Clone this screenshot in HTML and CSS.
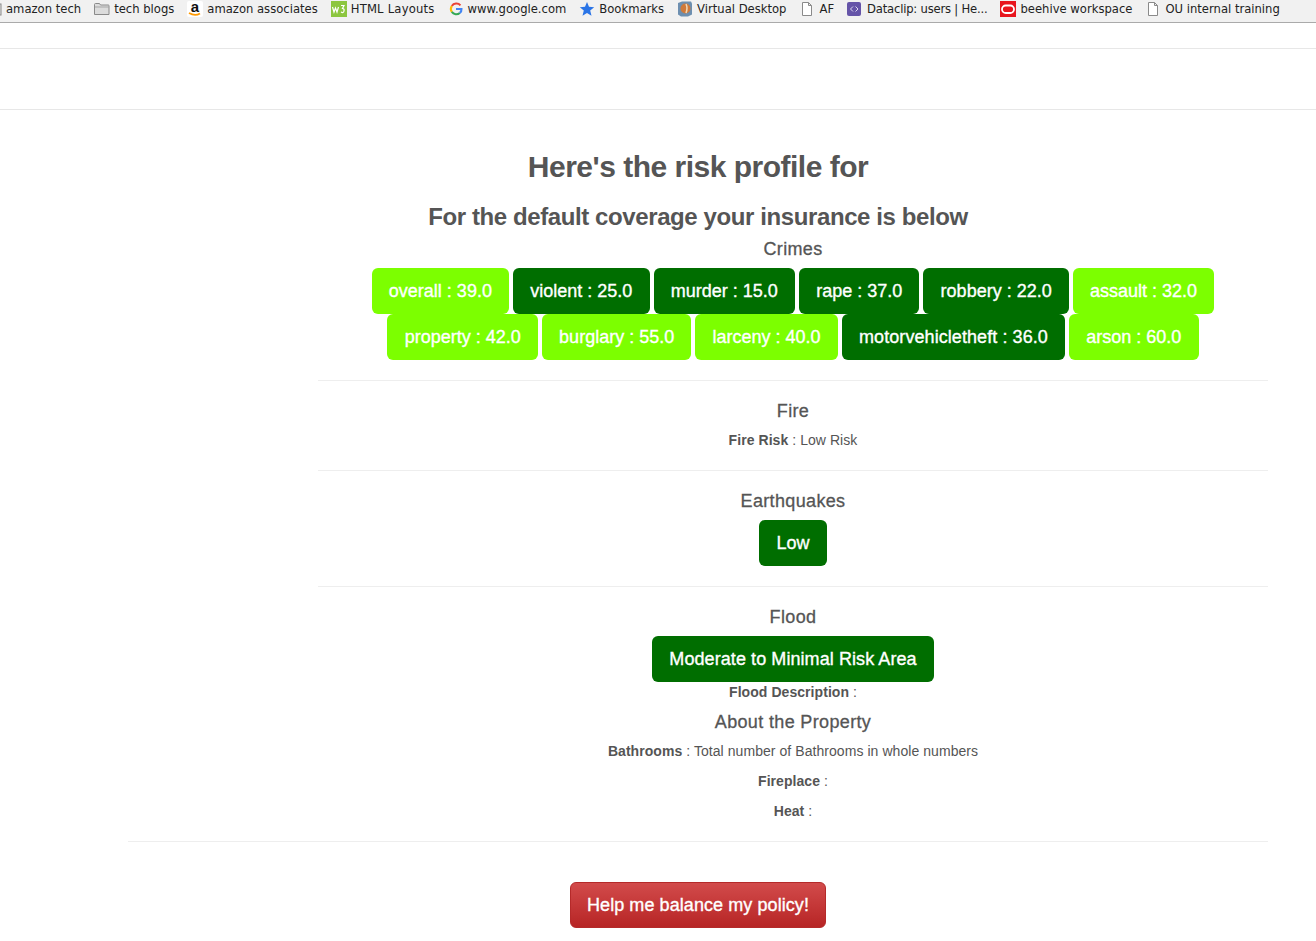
FILE: index.html
```html
<!DOCTYPE html>
<html lang="en">
<head>
<meta charset="utf-8">
<title>Risk profile</title>
<link rel="stylesheet" href="styles.css">
</head>
<body>
<div class="bookmarks">
  <div class="bm bm-first"><svg class="ico" viewBox="0 0 16 16"><rect x="1" y="3" width="14" height="11" fill="#e6e6e6" stroke="#888"/></svg><span>amazon tech</span></div>
  <div class="bm"><svg class="ico" viewBox="0 0 16 16"><path d="M.5 13.500V3.500q0-1 1-1h4l1 1.500h8q.5 0 .5 1v8.500z" fill="#dcdcdc" stroke="#8a8a8a"/><path d="M1 6h14" stroke="#a5a5a5"/></svg><span>tech blogs</span></div>
  <div class="bm"><svg class="ico" viewBox="0 0 16 16"><rect width="16" height="16" rx="2" fill="#fff"/><text x="8" y="10.500" class="ico-a">a</text><path d="M2 12q6 3.500 11 .5" fill="none" stroke="#f90" stroke-width="1.800"/></svg><span>amazon associates</span></div>
  <div class="bm"><svg class="ico" viewBox="0 0 16 16"><rect width="16" height="16" fill="#8cc63f"/><path d="M1.500 6l1.500 5 1.500-4 1.500 4 1.500-5M10 4.500h3l-1.500 3q2 0 1.500 2.500t-3 1" fill="none" stroke="#fff" stroke-width="1.200"/></svg><span class="wide">HTML Layouts</span></div>
  <div class="bm"><svg class="ico" viewBox="-1.500 -1.500 19 19"><path d="M13.300 3.700A6.500 6.500 0 0 0 3 4.500" fill="none" stroke="#ea4335" stroke-width="2.500"/><path d="M3 4.500a6.500 6.500 0 0 0 0 7" fill="none" stroke="#fbbc05" stroke-width="2.500"/><path d="M3 11.500a6.500 6.500 0 0 0 9.500 1.300" fill="none" stroke="#34a853" stroke-width="2.500"/><path d="M12.500 12.800A6 6 0 0 0 14.500 8H8" fill="none" stroke="#4285f4" stroke-width="2.500"/></svg><span>www.google.com</span></div>
  <div class="bm"><svg class="ico" viewBox="0 0 16 16"><path d="M8 1l2 4.800 5.200.4-4 3.400 1.300 5.100L8 12l-4.500 2.700 1.300-5.100-4-3.400L6 5.800z" fill="#2a74e6"/></svg><span>Bookmarks</span></div>
  <div class="bm"><svg class="ico" viewBox="0 0 16 16"><path d="M1 2l4-1.500h9l1 2v11l-4 2H4l-3-2z" fill="#6d8fb0"/><circle cx="8.500" cy="7.500" r="5" fill="#d07a3a"/><path d="M9 3q2 4 0 9" stroke="#f1d9b8" stroke-width="1.500" fill="none"/></svg><span>Virtual Desktop</span></div>
  <div class="bm"><svg class="ico" viewBox="0 0 16 16"><path d="M3.500 1.500h6l3 3v10h-9zM9.500 1.500v3h3" fill="#fff" stroke="#8a8a8a"/></svg><span>AF</span></div>
  <div class="bm"><svg class="ico" viewBox="0 0 16 16"><rect width="14" height="14" y="1" rx="2" fill="#6554a8"/><path d="M6 5.500L3.500 8 6 10.500M8.500 5.500L11 8l-2.500 2.500" fill="none" stroke="#ddd8f0"/></svg><span class="narrow">Dataclip: users | He...</span></div>
  <div class="bm"><svg class="ico" viewBox="0 0 16 16"><rect width="16" height="16" fill="#e8161e"/><rect x="2" y="4.500" width="12" height="7.500" rx="3.700" fill="none" stroke="#fff" stroke-width="1.800"/></svg><span>beehive workspace</span></div>
  <div class="bm"><svg class="ico" viewBox="0 0 16 16"><path d="M3.500 1.500h6l3 3v10h-9zM9.500 1.500v3h3" fill="#fff" stroke="#8a8a8a"/></svg><span>OU internal training</span></div>
</div>

<nav class="navbar"></nav>
<div class="subnav"></div>

<main class="container">
  <h1 class="title">Here's the risk profile for</h1>
  <h3 class="subtitle">For the default coverage your insurance is below</h3>

  <div class="col">
    <h4 class="head">Crimes</h4>
    <div class="badges">
      <a class="btn light">overall : 39.0</a>
      <a class="btn dark">violent : 25.0</a>
      <a class="btn dark">murder : 15.0</a>
      <a class="btn dark">rape : 37.0</a>
      <a class="btn dark">robbery : 22.0</a>
      <a class="btn light">assault : 32.0</a>
      <a class="btn light">property : 42.0</a>
      <a class="btn light">burglary : 55.0</a>
      <a class="btn light">larceny : 40.0</a>
      <a class="btn dark long">motorvehicletheft : 36.0</a>
      <a class="btn light">arson : 60.0</a>
    </div>
    <hr class="rule">
    <h4 class="head">Fire</h4>
    <p class="line"><b>Fire Risk</b> : Low Risk</p>
    <hr class="rule">
    <h4 class="head">Earthquakes</h4>
    <div class="badges"><a class="btn dark">Low</a></div>
    <hr class="rule">
    <h4 class="head">Flood</h4>
    <div class="badges"><a class="btn dark long">Moderate to Minimal Risk Area</a></div>
    <p class="line"><b>Flood Description</b> :</p>
    <h4 class="head head-tight">About the Property</h4>
    <p class="line"><b>Bathrooms</b> : Total number of Bathrooms in whole numbers</p>
    <p class="line"><b>Fireplace</b> :</p>
    <p class="line"><b>Heat</b> :</p>
  </div>

  <hr class="rule">
  <div class="cta"><a class="btn danger long">Help me balance my policy!</a></div>
</main>
</body>
</html>
```

FILE: styles.css
```css
* { box-sizing: border-box; }
html, body { height: 100%; }
body {
  margin: 0;
  height: 941px;
  overflow: hidden;
  background: #fff;
  color: #555;
  font-family: "Liberation Sans", Arial, sans-serif;
  font-size: 14px;
  line-height: 20px;
}
.bookmarks {
  display: flex;
  align-items: center;
  gap: 13px;
  height: 23px;
  padding-bottom: 4px;
  background: #f1f1f1;
  border-bottom: 1px solid #aaa;
  font-family: "DejaVu Sans", sans-serif;
  font-size: 11.6px;
  color: #222;
  white-space: nowrap;
  overflow: hidden;
}
.bm { display: flex; align-items: center; gap: 4px; flex: none; }
.bm-first { margin-left: -14px; }
.wide { letter-spacing: .2px; }
.narrow { letter-spacing: -.2px; }
.ico { width: 16px; height: 16px; flex: none; }
.ico-a { font: bold 15px "Liberation Sans", sans-serif; text-anchor: middle; fill: #111; }
.navbar { height: 26px; border-bottom: 1px solid #e7e7e7; }
.subnav { height: 61px; border-bottom: 1px solid #e7e7e7; }
.container { width: 1140px; margin-left: 128px; }
.title {
  margin: 40px 0 0;
  font-size: 30px;
  line-height: 33px;
  font-weight: 700;
  letter-spacing: -.5px;
  text-align: center;
}
.subtitle {
  margin: 20px 0 0;
  font-size: 24px;
  line-height: 27px;
  font-weight: 700;
  letter-spacing: -.4px;
  text-align: center;
}
.col { width: 950px; margin-left: 190px; text-align: center; }
.head {
  margin: 9px 0;
  font-size: 18px;
  line-height: 20px;
  font-weight: 400;
  letter-spacing: .35px;
  -webkit-text-stroke: .3px #555;
}
.head-tight { margin: 10px 0 9px; }
.badges { display: flex; flex-wrap: wrap; justify-content: center; column-gap: 4px; }
.btn {
  display: block;
  height: 46px;
  padding: 12px 17.2px;
  border-radius: 6px;
  font-size: 18px;
  line-height: 22px;
  color: #fff;
  -webkit-text-stroke: .35px #fff;
}
.long { letter-spacing: .075px; }
.light { background: #7cff00; }
.dark { background: #006e00; }
.danger {
  display: inline-block;
  background: linear-gradient(#d24b4b, #b72525);
  border: 1px solid #b52a2a;
  padding: 11px 16px;
}
.line { margin: 0 0 10px; letter-spacing: .06px; }
.line b { font-weight: 700; }
.rule { height: 1px; margin: 20px 0; border: 0; background: #eee; }
.cta { margin-top: 40px; text-align: center; }
```
